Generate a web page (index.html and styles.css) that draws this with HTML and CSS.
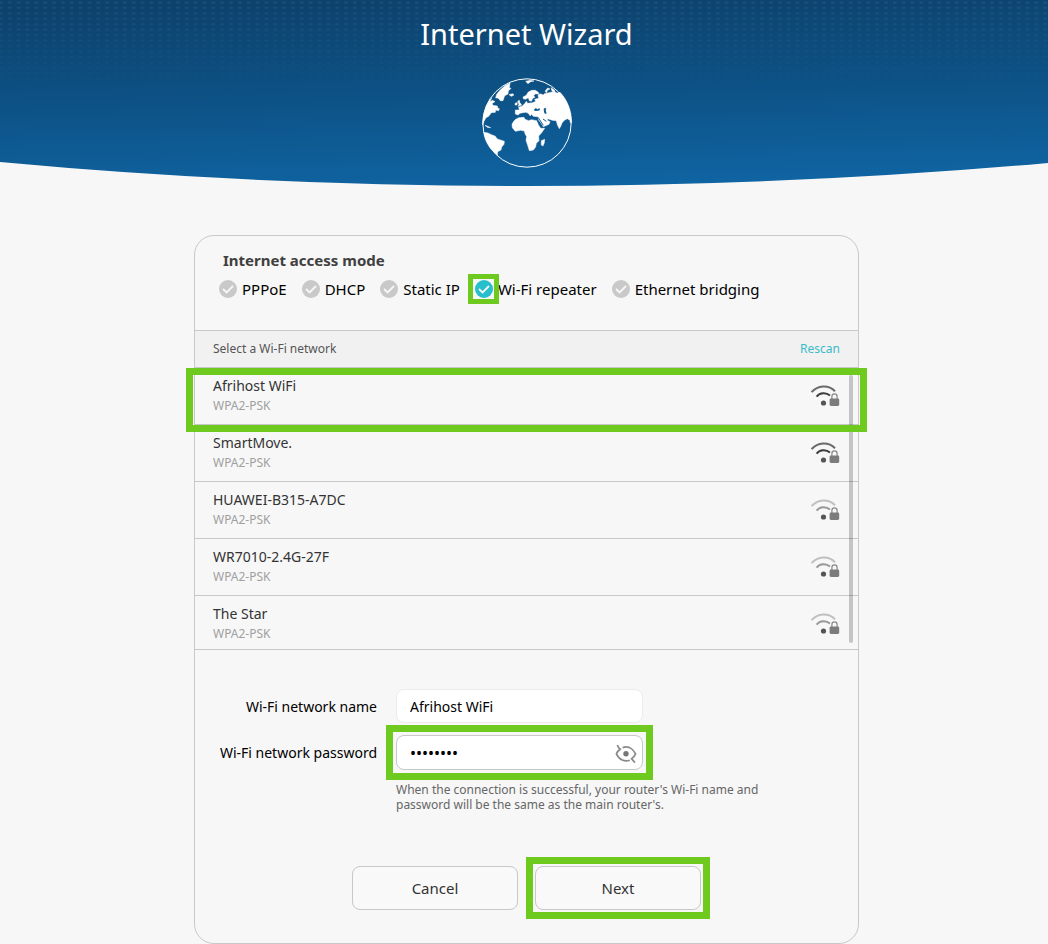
FILE: index.html
```html
<!DOCTYPE html>
<html lang="en">
<head>
    <meta charset="UTF-8">
    <meta name="viewport" content="width=device-width, initial-scale=1.0">
    <title>Internet Wizard</title>
    <link rel="stylesheet" href="styles.css">
</head>
<body>
    <svg class="icon-defs" aria-hidden="true">
        <symbol id="wifi-lock" viewBox="0 0 29 22">
            <path class="arc-outer" d="M0.6 7.2C6.5 0 17.5 -0.6 24 6.2"/>
            <path class="arc-inner" d="M5.6 11.6C9 7.6 15 7.2 19 10.6"/>
            <circle cx="12.5" cy="18" r="2.6" fill="#555"/>
            <path d="M20.9 14v-2.6a2.6 2.6 0 0 1 5.2 0V14" fill="none" stroke="#888" stroke-width="1.2"/>
            <rect x="18.6" y="13.6" width="9.6" height="7.4" rx="1.4" fill="#7c7c7c"/>
        </symbol>
    </svg>

    <header class="banner">
        <svg class="banner-bg" viewBox="0 0 1048 187" preserveAspectRatio="none" aria-hidden="true">
            <defs>
                <linearGradient id="sky" x1="0.42" y1="0" x2="0.58" y2="1">
                    <stop offset="0" stop-color="#0d426d"/>
                    <stop offset="0.5" stop-color="#0d5286"/>
                    <stop offset="1" stop-color="#0f64a2"/>
                </linearGradient>
                <linearGradient id="fade" x1="0" y1="0" x2="0" y2="1">
                    <stop offset="0" stop-color="#fff"/>
                    <stop offset="0.5" stop-color="#000"/>
                </linearGradient>
                <pattern id="dots" width="8.85" height="5.45" patternUnits="userSpaceOnUse">
                    <ellipse cx="1" cy="2.4" rx="2.2" ry="1" fill="#5d9aa8" fill-opacity="0.17"/>
                    <ellipse cx="9.85" cy="2.4" rx="2.2" ry="1" fill="#5d9aa8" fill-opacity="0.17"/>
                </pattern>
                <mask id="dot-mask">
                    <rect width="1048" height="187" fill="url(#fade)"/>
                </mask>
            </defs>
            <path d="M0 0H1048V163Q790 186 526 186Q258 186 0 162Z" fill="url(#sky)"/>
            <rect width="1048" height="150" fill="url(#dots)" mask="url(#dot-mask)"/>
        </svg>
        <h1>Internet Wizard</h1>
        <svg class="globe" viewBox="20 23 270 270" aria-hidden="true">
            <circle cx="155" cy="158" r="132.5" fill="none" stroke="#fff" stroke-width="3"/>
            <g fill="#fff" stroke="#fff" stroke-width="1.5" stroke-linejoin="round">
                <path d="M64 72L74 60L88 47L104 38L102 52L107 54L99 62L98 71L88 76L83 91L75 91L68 83L61 83Z"/>
                <path d="M101 73L112 70L116 74L108 78Z"/>
                <path d="M49 82L44 95L51 90L59 94L51 99L52 105L66 107L67 113L72 115L70 121L61 119L60 126L48 127L40 138L32 142L26 153L22 164C22 132 31 104 49 82Z"/>
                <path d="M29 165L37 168L46 172L36 171Z"/>
                <path d="M25 186L38 188L48 193L59 197L66 206L87 213L86 222L79 230L77 239L67 244L66 254C43 236 29 214 25 186Z"/>
                <path d="M121 147L131 142L146 141L149 147L160 151L168 148L184 151L189 163L196 174L208 174L199 187L190 197L191 211L183 219L181 230L174 239L162 241L158 228L152 210L154 199L149 190L147 182L136 180L120 183L111 172L110 162L115 153Z"/>
                <path d="M198 211L208 207L207 217L203 227L198 224Z"/>
                <path d="M127 93L132 90L133 96L139 104L128 108L131 102Z"/>
                <path d="M120 98L126 97L125 104L119 104Z"/>
                <path d="M143 80L153 75L158 66L169 60L180 60L189 66L190 72L181 70L175 76L179 81L173 83L168 93L162 91L159 82L150 87L144 85Z"/>
                <path d="M151 33L165 30L176 32L166 34L158 40Z"/>
                <path d="M209 63L217 53L224 56L216 60L214 67ZM227 52L237 59L241 70L230 62Z"/>
                <path d="M120 131L120 119L132 119L130 111L141 107L149 99L153 93L157 99L172 97L181 93L178 87L190 84L188 75L194 70L204 74L207 70L221 67L230 65L247 68L254 66C276 89 289 121 289 157L285 157L284 150L276 145L267 150L260 158L257 166L252 175L246 163L243 151L231 150L217 145L216 150L224 154L221 162L204 169L197 158L190 149L188 139L174 138L168 131L165 137L158 128L151 126L142 127L134 129L128 134Z"/>
            </g>
            <g fill="#105c95">
                <path d="M176 118L181 113L187 117L192 113L194 119L189 121L178 122Z"/>
                <path d="M205 115L210 112L213 116L211 120L214 129L209 131L206 125Z"/>
            </g>
            <path d="M188 141L204 165M203 146L213 153" fill="none" stroke="#105c95" stroke-width="3"/>
        </svg>
    </header>

    <main class="wizard">
        <form class="card">
            <fieldset class="modes">
                <legend>Internet access mode</legend>
                <div class="mode-list">
                    <label><input type="radio" name="mode">PPPoE</label>
                    <label><input type="radio" name="mode">DHCP</label>
                    <label><input type="radio" name="mode">Static IP</label>
                    <label class="marked mark-radio"><input type="radio" name="mode" checked>Wi-Fi repeater</label>
                    <label><input type="radio" name="mode">Ethernet bridging</label>
                </div>
            </fieldset>

            <div class="list-head">
                <span>Select a Wi-Fi network</span>
                <a href="#">Rescan</a>
            </div>

            <div class="networks">
                <div class="network marked mark-row">
                    <div><div class="ssid">Afrihost WiFi</div><div class="security">WPA2-PSK</div></div>
                    <svg class="signal strong"><use href="#wifi-lock"/></svg>
                </div>
                <div class="network">
                    <div><div class="ssid">SmartMove.</div><div class="security">WPA2-PSK</div></div>
                    <svg class="signal strong"><use href="#wifi-lock"/></svg>
                </div>
                <div class="network">
                    <div><div class="ssid">HUAWEI-B315-A7DC</div><div class="security">WPA2-PSK</div></div>
                    <svg class="signal"><use href="#wifi-lock"/></svg>
                </div>
                <div class="network">
                    <div><div class="ssid">WR7010-2.4G-27F</div><div class="security">WPA2-PSK</div></div>
                    <svg class="signal"><use href="#wifi-lock"/></svg>
                </div>
                <div class="network">
                    <div><div class="ssid">The Star</div><div class="security">WPA2-PSK</div></div>
                    <svg class="signal"><use href="#wifi-lock"/></svg>
                </div>
                <div class="scrollbar"></div>
            </div>

            <div class="fields">
                <label for="ssid">Wi-Fi network name</label>
                <input class="text-box" id="ssid" type="text" value="Afrihost WiFi">

                <label for="password">Wi-Fi network password</label>
                <div class="password marked mark-box">
                    <input class="text-box" id="password" type="password" value="password">
                    <button class="eye" type="button" aria-label="Show password">
                        <svg viewBox="0 0 22 20" width="22" height="20" fill="none" stroke="#8a8a8a" stroke-width="1.7">
                            <path d="M2.2 1.2L3.8 4L6 5.6M7.6 3.7C12.5 1.7 17.5 4 20.6 9.8C19.6 12 18.2 13.6 16.6 14.8L20 18.6M14.8 16.2C9.5 18.2 4.2 15.8 1.4 9.8C2.2 8 3.4 6.4 5 5.2"/>
                            <circle cx="11" cy="9.8" r="2.7" fill="#777" stroke="none"/>
                        </svg>
                    </button>
                </div>

                <p class="hint">When the connection is successful, your router's Wi-Fi name and password will be the same as the main router's.</p>
            </div>

            <div class="actions">
                <button class="btn" type="button">Cancel</button>
                <button class="btn marked mark-box" type="button">Next</button>
            </div>
        </form>
    </main>
</body>
</html>
```
FILE: styles.css
```css
*,
*::after {
    box-sizing: border-box;
}

body {
    margin: 0;
    font-family: "Noto Sans", "Open Sans", sans-serif;
    font-size: 14px;
    color: #000;
    background-color: #f7f7f7;
}

.icon-defs {
    display: none;
}

.banner {
    position: relative;
    height: 187px;
    padding: 12px 0 0 5px;
    display: flex;
    flex-direction: column;
    align-items: center;
    gap: 22px;
}

.banner-bg {
    position: absolute;
    top: 0;
    left: 0;
    width: 100%;
    height: 100%;
    z-index: -1;
}

h1 {
    margin: 0;
    color: #fff;
    font-size: 29px;
    font-weight: normal;
    line-height: 44px;
}

.globe {
    width: 90px;
    height: 90px;
}

.wizard {
    display: flex;
    justify-content: center;
    padding: 48px 0 0 5px;
}

.card {
    width: 100%;
    max-width: 665px;
    border: 1px solid #c8c8c8;
    border-radius: 20px;
}

/* green frames round the things to click */
.marked {
    position: relative;
}

.marked::after {
    content: "";
    position: absolute;
    border: 7px solid #6fca1f;
    pointer-events: none;
}

.mark-row::after {
    inset: 0 -9px -8px;
    z-index: 1;
}

.mark-box::after {
    inset: -10px;
}

.mark-radio::after {
    width: 31px;
    height: 30px;
    top: -4px;
    left: -7px;
    border-width: 5px;
}

.modes {
    margin: 0;
    padding: 13px 24px 0;
    height: 95px;
    border: none;
    border-bottom: 1px solid #c8c8c8;
}

legend {
    float: left;
    width: 100%;
    padding: 0 4px;
    color: #404040;
    font-size: 15px;
    font-weight: bold;
    line-height: 22px;
}

.mode-list {
    clear: both;
    display: flex;
    gap: 15px;
    padding-top: 7px;
    font-size: 15px;
    line-height: 22px;
}

.mode-list label {
    display: flex;
    align-items: center;
    gap: 5px;
    white-space: nowrap;
}

.mode-list input {
    appearance: none;
    width: 18px;
    height: 18px;
    margin: 0;
    border-radius: 50%;
    background: #c9c9c9 url("data:image/svg+xml,%3Csvg xmlns='http://www.w3.org/2000/svg' viewBox='0 0 18 18'%3E%3Cpath d='M4 9l3.6 3.5L14 6' fill='none' stroke='%23f7f7f7' stroke-width='1.8'/%3E%3C/svg%3E");
}

.mode-list input:checked {
    background-color: #26bfcb;
}

.list-head {
    display: flex;
    justify-content: space-between;
    padding: 0 18px;
    border-bottom: 1px solid #c8c8c8;
    background-color: #f1f1f1;
    color: #555;
    font-size: 12px;
    line-height: 36px;
}

.list-head a {
    color: #3bbcc8;
    text-decoration: none;
}

.networks {
    position: relative;
    border-bottom: 1px solid #c8c8c8;
}

.network {
    display: flex;
    justify-content: space-between;
    align-items: flex-start;
    padding: 8px 18px;
    line-height: 20px;
    border-bottom: 1px solid #c8c8c8;
}

.network:nth-last-child(2) {
    padding-bottom: 5px;
    border-bottom: none;
}

.ssid {
    color: #333;
}

.security {
    color: #a0a0a0;
    font-size: 12px;
}

.signal {
    width: 29px;
    height: 22px;
    margin-top: 9px;
    --outer: #c0c0c0;
    --inner: #999;
}

.signal.strong {
    --outer: #6a6a6a;
    --inner: #3c3c3c;
}

.arc-outer,
.arc-inner {
    fill: none;
    stroke: var(--outer);
    stroke-width: 2;
}

.arc-inner {
    stroke: var(--inner);
}

.scrollbar {
    position: absolute;
    top: 7px;
    right: 5px;
    bottom: 6px;
    width: 4px;
    border-radius: 2px;
    background-color: rgba(0,0,0,0.2);
}

.fields {
    display: grid;
    grid-template-columns: 182px 247px;
    align-items: center;
    gap: 12px 19px;
    padding-top: 39px;
}

.fields label {
    text-align: right;
    white-space: nowrap;
}

.text-box {
    display: block;
    width: 100%;
    height: 34px;
    padding: 0 13px;
    border: 1px solid #ececec;
    border-radius: 8px;
    background-color: #fff;
    color: #000;
    font-family: inherit;
    font-size: 14px;
}

.password .text-box {
    height: 35px;
    border-color: #c8c8c8;
    font-size: 16px;
}

.eye {
    position: absolute;
    top: 9px;
    right: 6px;
    padding: 0;
    border: none;
    background: none;
    cursor: pointer;
}

.eye svg {
    display: block;
}

.hint {
    grid-column: 2;
    width: 372px;
    margin: 0;
    color: #666;
    font-size: 12px;
    line-height: 15px;
}

.actions {
    display: flex;
    justify-content: center;
    gap: 17px;
    padding: 54px 0 33px;
}

.btn {
    width: 166px;
    height: 44px;
    border: 1px solid #c8c8c8;
    border-radius: 8px;
    background-color: #f9f9f9;
    color: #333;
    font-family: inherit;
    font-size: 15px;
    cursor: pointer;
}
```
